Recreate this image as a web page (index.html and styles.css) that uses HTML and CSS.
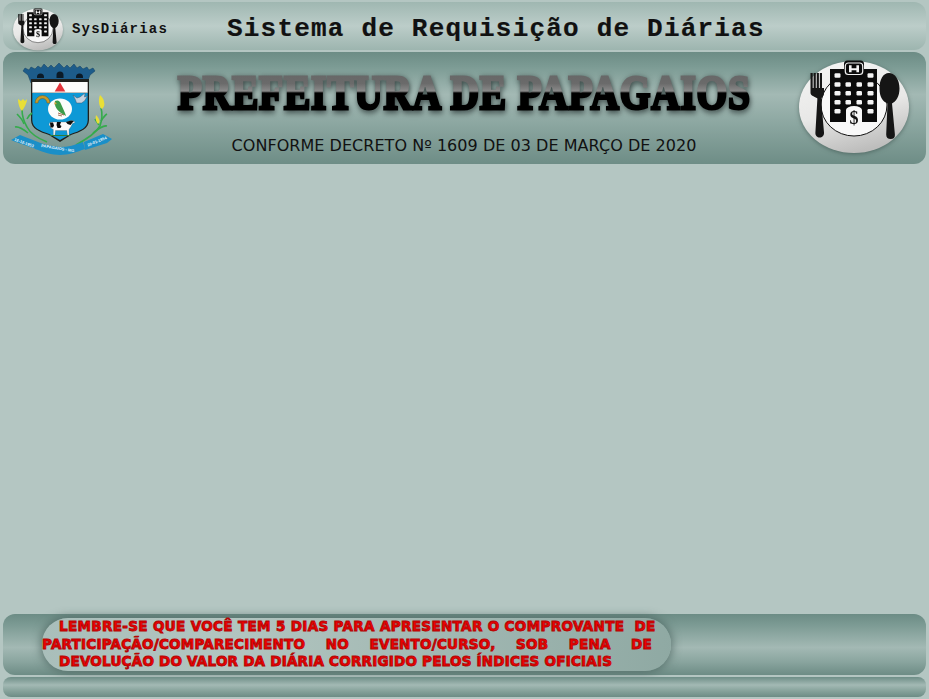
FILE: index.html
```html
<!DOCTYPE html>
<html lang="pt-BR">
<head>
<meta charset="utf-8">
<title>Sistema de Requisição de Diárias</title>
<link rel="stylesheet" href="styles.css">
</head>
<body>
<svg class="defs" width="0" height="0" aria-hidden="true">
  <defs>
    <linearGradient id="plateGrad" x1="0.2" y1="0" x2="0.5" y2="1">
      <stop offset="0" stop-color="#f4f4f3"/>
      <stop offset="0.55" stop-color="#e8e8e7"/>
      <stop offset="1" stop-color="#bdbdbc"/>
    </linearGradient>
    <symbol id="hotel" viewBox="0 0 110 94">
      <ellipse cx="55" cy="47" rx="55" ry="46" fill="url(#plateGrad)"/>
      <ellipse cx="55" cy="45" rx="33" ry="31" fill="#f8f8f8" stroke="#111" stroke-width="1"/>
      <path d="M11.500 13h2.200v15h.9V13h2.200v15h.9V13h2.200v15h.9V13h2.200v15H25v5c0 3-2 4-3 5.500l3 34c.2 3.200-1.900 5-4.300 5s-4.500-1.800-4.300-5l2-34c-1.200-1.500-6.900-2.500-6.900-5.500Z" fill="#151515"/>
      <path d="M90 13c6 0 10.500 6.500 10.500 15.500 0 8-3.500 13-7.500 15l2.900 31c.3 3-1.500 4.500-4.200 4.500s-4.600-1.500-4.500-4.500l1.300-31c-5-2-8-7-8-15C80.500 19.500 84 13 90 13Z" fill="#151515"/>
      <path d="M31 9h14v-5a3.500 3.500 0 0 1 3.500-3.500h13A3.500 3.500 0 0 1 65 4v5h13v53H63V50a8 4 0 0 0-16 0v12H31Z" fill="#0b0b0b"/>
      <rect x="46.300" y="3" width="17.400" height="11.500" rx="3" fill="#0b0b0b" stroke="#f0f0f0" stroke-width="1.200"/>
      <path d="M50 5.300h2.600v2.900h4.800V5.300H60v7h-2.600V10.300h-4.800v2h-2.600Z" fill="#f4f4f4"/>
      <g fill="#f4f4f4">
        <rect x="35.500" y="13.300" width="6" height="4.400" rx="1.200"/><rect x="68.500" y="13.300" width="6" height="4.400" rx="1.200"/>
        <rect x="35.500" y="22.300" width="6" height="4.400" rx="1.200"/><rect x="46.500" y="22.300" width="5.500" height="4.400" rx="1.200"/><rect x="57.500" y="22.300" width="5.500" height="4.400" rx="1.200"/><rect x="68.500" y="22.300" width="6" height="4.400" rx="1.200"/>
        <rect x="35.500" y="31" width="6" height="4.400" rx="1.200"/><rect x="46.500" y="31" width="5.500" height="4.400" rx="1.200"/><rect x="57.500" y="31" width="5.500" height="4.400" rx="1.200"/><rect x="68.500" y="31" width="6" height="4.400" rx="1.200"/>
        <rect x="35.500" y="40" width="6" height="4.400" rx="1.200"/><rect x="46.500" y="40" width="5.500" height="4.400" rx="1.200"/><rect x="57.500" y="40" width="5.500" height="4.400" rx="1.200"/><rect x="68.500" y="40" width="6" height="4.400" rx="1.200"/>
        <rect x="35.500" y="49" width="6" height="4.400" rx="1.200"/><rect x="68.500" y="49" width="6" height="4.400" rx="1.200"/>
      </g>
      <text x="55" y="64" class="dollar">$</text>
    </symbol>
  </defs>
</svg>

<div class="page">
  <header class="topbar">
    <svg class="logo-small" viewBox="0 0 110 94" aria-hidden="true"><use href="#hotel"/></svg>
    <span class="brand">SysDiárias</span>
    <span class="system">Sistema de Requisição de Diárias</span>
  </header>

  <section class="banner">
    <svg class="arms" viewBox="0 0 101 94" aria-hidden="true">
      <!-- crown -->
      <path d="M14 6l4 2 2-3 4 2 3-3 3 2 3-4 4 4 3-3 3 3 5-5 5 5 3-3 3 3 4-4 3 4 3-2 3 3 4-2 2 3 4-2 2 3-5 4-3 8H20l-3-8-5-4Z" fill="#1d5c8a" stroke="#123f60" stroke-width=".5"/>
      <path d="M26 15a3.500 3.500 0 0 1 7 0v1h-7Z M45.500 13a3.500 3.500 0 0 1 7 0v3h-7Z M65 15a3.500 3.500 0 0 1 7 0v1h-7Z" fill="#0b1a26"/>
      <path d="M20 17h58v41c0 9-9 12-18 15l-11 7-11-7c-9-3-18-6-18-15Z" fill="#20211d"/>
      <path d="M21.300 31h55.400v27c0 8-8 11-17 14l-10.700 6-10.700-6c-9-3-17-6-17-14Z" fill="#0e99d6"/>
      <rect x="21.300" y="20" width="55.400" height="10.500" fill="#fdfdfb"/>
      <path d="M49 20.500l5.300 9H43.700Z" fill="#e2353b"/>
      <path d="M21.300 30.500h55.400" stroke="#e2e2df" stroke-width=".6"/>
      <!-- parrot medallion -->
      <ellipse cx="49" cy="47" rx="12" ry="10.500" fill="#fcfcfb"/>
      <path d="M44 39c3-1.500 5 0 6 3l4 9 1 3-5-3c-4-3-7-7-6-12Z" fill="#3c9b49"/>
      <path d="M44 39.500l1.800 2.500-2.600.5Z" fill="#d3a23a"/>
      <path d="M47 51l6 2M47 53l4 1" stroke="#8a4a2a" stroke-width=".8"/>
      <!-- gear and dove -->
      <path d="M24 41a7.500 7.500 0 0 1 15 0h-3a4.500 4.500 0 0 0-9 0Z" fill="#c79a2a" stroke="#6f5a1c" stroke-width=".5"/>
      <path d="M62 33l4 3 3-1 5-4-.5 4 3-1-3 5-3 2h-5l-1-3Z" fill="#c7d2de" stroke="#3d566e" stroke-width=".5"/>
      <!-- cow -->
      <path d="M38 63c0-2 1-3 3-3h15l4-1.500 3 .5 1 1.500-2.500 1-1.500 3-2 3v6h-1.500l-.7-5h-11.300l-.7 5h-1.500v-6c-1.500-1-3-1.500-3-3Z" fill="#fafafa" stroke="#555" stroke-width=".3"/>
      <path d="M39 60.500h3l1 3-1 2h-2.500ZM46 60h4l-1 3 1.500 1-1 2h-3l-1-3ZM55 60l5-1.500 3 .5-1.500 1.500-2 2.500-3-1Z" fill="#0c0c0c"/>
      <rect x="39" y="73" width="20" height="1" fill="#2f7d3a"/>
      <!-- corn -->
      <g fill="none" stroke="#35ab4c" stroke-width="1.600">
        <path d="M11 47c0 7 2 13 5 18 3 6 10 11 20 15"/>
        <path d="M6 52c3 3 6 7 7 10"/>
        <path d="M4 65c4-1 8 2 13 6"/>
        <path d="M16 57c1-2 2-4 5-6"/>
        <path d="M90 46c2 7 1 12-1 18-4 7-12 12-24 19"/>
        <path d="M96 52c-2 1-4 4-6 7"/>
        <path d="M96 64c-4-1-9 3-14 7"/>
        <path d="M84 57l4 6"/>
      </g>
      <path d="M11 49c-2-2-4-7-4-12l3 2 2-2 2 2 2-2c0 4-3 9-5 12Z" fill="#e9df37"/>
      <path d="M91 47c-3-2-4-9-2-14 2 2 4 4 4 7 1 3 0 5-2 7Z" fill="#e9df37"/>
      <path d="M87 62c-2-2-3-6-2-9 2 2 3 4 3.500 6 .2 1-.5 2-1.500 3Z" fill="#e9df37"/>
      <!-- ribbons -->
      <path d="M0 78l9-5 18 7-1 7-1 0-20-7Z" fill="#1a8fc8"/>
      <path d="M27 80c7 3 14 4 22 5 8 0 15-2 23-5l2 7c-8 3-17 6-25 6-8 0-17-3-25-6Z" fill="#1a8fc8"/>
      <path d="M73 80l19-8 9 5-5 4-22 7Z" fill="#1a8fc8"/>
      <text class="ribbon" transform="translate(3 78.500) rotate(20)">12-12-1953</text>
      <text class="ribbon" transform="translate(30 85) rotate(9)">PAPAGAIOS - MG</text>
      <text class="ribbon" transform="translate(77 84.500) rotate(-22)">20-01-1954</text>
    </svg>
    <div class="heading">
      <h1 class="city">PREFEITURA DE PAPAGAIOS</h1>
      <p class="decree">CONFORME DECRETO Nº 1609 DE 03 DE MARÇO DE 2020</p>
    </div>
    <svg class="logo-large" viewBox="0 0 110 94" aria-hidden="true"><use href="#hotel"/></svg>
  </section>

  <main class="content"></main>

  <section class="notice-bar">
    <div class="notice">
      <p class="line indent first">LEMBRE-SE QUE VOCÊ TEM 5 DIAS PARA APRESENTAR O COMPROVANTE&nbsp; DE</p>
      <p class="line spread">PARTICIPAÇÃO/COMPARECIMENTO NO EVENTO/CURSO, SOB PENA DE</p>
      <p class="line indent">DEVOLUÇÃO DO VALOR DA DIÁRIA CORRIGIDO PELOS ÍNDICES OFICIAIS</p>
    </div>
  </section>

  <footer class="footer-bar"></footer>
</div>
</body>
</html>
```

FILE: styles.css
```css
* { box-sizing: border-box; }

html, body {
  margin: 0;
  height: 100%;
  overflow: hidden;
  background: #b4c6c2;
}

.defs { position: absolute; }

.page {
  display: flex;
  flex-direction: column;
  height: 699px;
  padding: 2px 3px 2px 3px;
}

.topbar {
  display: flex;
  align-items: center;
  height: 48px;
  flex: none;
  padding: 6px 0 0 10px;
  border-radius: 12px;
  background: linear-gradient(#9fb7b1 0%, #bccdc9 50%, #9db5af 100%);
}

.logo-small {
  width: 50px;
  height: 43px;
  flex: none;
  filter: drop-shadow(0 1px 1px rgba(60, 80, 75, .4));
}

.brand {
  margin-left: 9px;
  font: bold 14px/1 "Liberation Mono", monospace;
  letter-spacing: 1.200px;
  color: #111;
}

.system {
  margin-left: 59px;
  font: bold 26px/1 "Liberation Mono", monospace;
  letter-spacing: 1.200px;
  color: #111;
  -webkit-text-stroke: .2px #111;
}

.banner {
  display: grid;
  grid-template-columns: 110px minmax(0, 1fr) 126px;
  align-items: start;
  height: 112px;
  flex: none;
  margin-top: 2px;
  padding-left: 8px;
  border-radius: 12px;
  background: linear-gradient(#6c8c85 0%, #7d9c95 14%, #a3b9b4 38%, #8ba6a0 65%, #6e8d86 100%);
}

.arms {
  width: 101px;
  height: 94px;
  margin-top: 10px;
}

.heading {
  display: flex;
  flex-direction: column;
  align-items: center;
  padding: 17px 0 0 7px;
}

.city {
  flex: none;
  margin: 0;
  padding: 0 4px;
  font: bold 48px/48px "Liberation Serif", serif;
  letter-spacing: 1px;
  white-space: nowrap;
  color: transparent;
  -webkit-text-stroke: 3px transparent;
  background: linear-gradient(#666 0%, #6a6a6a 30%, #8a8a8a 46%, #000 50%, #000 100%);
  -webkit-background-clip: text;
  background-clip: text;
  transform: scaleX(.82);
  filter: drop-shadow(1px 2px 3px rgba(20, 30, 30, .75));
}

.decree {
  margin: 19px 0 0;
  font: 16px/20px "DejaVu Sans", sans-serif;
  letter-spacing: .04px;
  white-space: nowrap;
  color: #111;
}

.logo-large {
  width: 110px;
  height: 94px;
  margin-top: 8px;
  margin-left: -1px;
  filter: drop-shadow(0 1px 2px rgba(40, 60, 55, .5));
}

.content { flex: 1; }

.notice-bar {
  height: 61px;
  flex: none;
  padding: 4px 0 0 39px;
  border-radius: 12px;
  background: linear-gradient(#6c8c85 0%, #7a9992 16%, #a3b9b4 55%, #8aa59f 78%, #6d8c85 100%);
}

.notice {
  width: 629px;
  height: 53px;
  border-radius: 26px;
  background: linear-gradient(100deg, #a9beba 0%, #b2c5c0 30%, #8fa9a3 100%);
  box-shadow: 0 0 8px 2px rgba(70, 95, 90, .65);
}

.line {
  margin: 0;
  width: 610px;
  font: bold 13.500px/17.500px "DejaVu Sans", sans-serif;
  letter-spacing: .23px;
  white-space: nowrap;
  color: #f00000;
  -webkit-text-stroke: .9px #b00606;
}

.indent { padding-left: 17px; }

.first { letter-spacing: .35px; }

.spread {
  white-space: normal;
  text-align: justify;
  text-align-last: justify;
}

.footer-bar {
  height: 20px;
  flex: none;
  margin-top: 2px;
  border-radius: 8px;
  background: linear-gradient(#6e8e87 0%, #a3b9b4 40%, #86a29b 70%, #6d8c85 100%);
}

.dollar {
  font: bold 18px "Liberation Serif", serif;
  text-anchor: middle;
  fill: #111;
}

.ribbon {
  font: bold 4px "Liberation Sans", sans-serif;
  fill: #e8f4fa;
}
```
